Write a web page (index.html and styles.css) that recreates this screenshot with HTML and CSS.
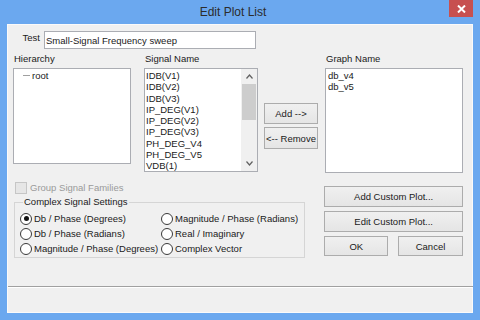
FILE: index.html
```html
<!DOCTYPE html>
<html lang="en">
<head>
  <meta charset="UTF-8">
  <title>Edit Plot List</title>
  <link rel="stylesheet" href="styles.css">
</head>
<body>
  <div class="window">
    <div class="titlebar">
      <div class="spacer"></div>
      <div class="title">Edit Plot List</div>
      <div class="close">
        <svg width="9" height="8" viewBox="0 0 9 8"><path d="M1 0.5 L8 7.5 M8 0.5 L1 7.5" stroke="#fff" stroke-width="2"/></svg>
      </div>
    </div>
    <div class="client">
      <div class="main">
        <div class="test-row">
          <label class="test-label">Test</label>
          <input class="test-input" type="text" value="Small-Signal Frequency sweep">
        </div>

        <div class="lists">
          <div class="col col-hier">
            <div class="col-label">Hierarchy</div>
            <div class="box hier-box">
              <div class="tree-item"><span class="tree-line"></span>root</div>
            </div>
          </div>

          <div class="col col-signal">
            <div class="col-label">Signal Name</div>
            <div class="box signal-box">
              <div class="items">
                <div>IDB(V1)</div>
                <div>IDB(V2)</div>
                <div>IDB(V3)</div>
                <div>IP_DEG(V1)</div>
                <div>IP_DEG(V2)</div>
                <div>IP_DEG(V3)</div>
                <div>PH_DEG_V4</div>
                <div>PH_DEG_V5</div>
                <div>VDB(1)</div>
              </div>
              <div class="scrollbar">
                <div class="arrow">
                  <svg width="7" height="5" viewBox="0 0 7 5"><path d="M0.5 4.5 L3.5 1 L6.5 4.5" fill="none" stroke="#606060" stroke-width="1.2"/></svg>
                </div>
                <div class="track"><div class="thumb"></div></div>
                <div class="arrow">
                  <svg width="7" height="5" viewBox="0 0 7 5"><path d="M0.5 0.5 L3.5 4 L6.5 0.5" fill="none" stroke="#606060" stroke-width="1.2"/></svg>
                </div>
              </div>
            </div>
          </div>

          <div class="col col-move">
            <button class="btn btn-add">Add --&gt;</button>
            <button class="btn btn-remove">&lt;-- Remove</button>
          </div>

          <div class="col col-graph">
            <div class="col-label">Graph Name</div>
            <div class="box graph-box">
              <div>db_v4</div>
              <div>db_v5</div>
            </div>
          </div>
        </div>

        <div class="bottom">
          <div class="bottom-left">
            <div class="check-row">
              <span class="checkbox"></span>
              <span class="check-label">Group Signal Families</span>
            </div>
            <fieldset class="group">
              <legend>Complex Signal Settings</legend>
              <div class="radios">
                <div class="radio-row"><span class="radio checked"></span>Db / Phase (Degrees)</div>
                <div class="radio-row"><span class="radio"></span>Magnitude / Phase (Radians)</div>
                <div class="radio-row"><span class="radio"></span>Db / Phase (Radians)</div>
                <div class="radio-row"><span class="radio"></span>Real / Imaginary</div>
                <div class="radio-row"><span class="radio"></span>Magnitude / Phase (Degrees)</div>
                <div class="radio-row"><span class="radio"></span>Complex Vector</div>
              </div>
            </fieldset>
          </div>
          <div class="bottom-right">
            <button class="btn btn-wide">Add Custom Plot...</button>
            <button class="btn btn-wide">Edit Custom Plot...</button>
            <div class="ok-row">
              <button class="btn btn-ok">OK</button>
              <button class="btn btn-cancel">Cancel</button>
            </div>
          </div>
        </div>
      </div>
      <div class="status"></div>
    </div>
  </div>
</body>
</html>
```

FILE: styles.css
```css
body {
  margin: 0;
  font-family: 'Liberation Sans', Arial, sans-serif;
  font-size: 9.5px;
  color: #1a1a1a;
  white-space: nowrap;
}
.window {
  width: 480px;
  height: 320px;
  box-sizing: border-box;
  background: #6ba8ef;
  padding: 0 7px 7px 7px;
  display: flex;
  flex-direction: column;
}
.titlebar {
  height: 24px;
  display: flex;
  align-items: flex-start;
}
.spacer {
  width: 10px;
}
.title {
  flex: 1;
  text-align: center;
  font-size: 12px;
  line-height: 24px;
  color: #2c2c2c;
}
.close {
  width: 24px;
  height: 17px;
  background: #c75050;
  display: flex;
  align-items: center;
  justify-content: center;
}
.client {
  flex: 1;
  background: #f0f0f0;
  display: flex;
  flex-direction: column;
  border-top: 1px solid #fafafa;
  border-left: 1px solid #fafafa;
  box-shadow: inset -1px -1px 0 #fafafa;
}
.main {
  height: 261px;
  box-sizing: border-box;
  padding: 6px 10px 0 5px;
}
.status {
  flex: 1;
  border-top: 1px solid #a0a0a0;
  box-shadow: inset 0 1px 0 #fff;
}

/* test row */
.test-row {
  display: flex;
  height: 18px;
}
.test-label {
  width: 27px;
  padding-right: 4px;
  text-align: right;
  line-height: 14px;
}
.test-input {
  width: 212px;
  height: 18px;
  box-sizing: border-box;
  margin: 0;
  border: 1px solid #abadb3;
  padding: 0 1px;
  font-family: inherit;
  font-size: 9.5px;
  color: #1a1a1a;
  background: #fff;
}

/* lists */
.lists {
  display: flex;
  margin-top: 3px;
}
.col-label {
  height: 14px;
  line-height: 14px;
  margin-bottom: 2px;
  padding-left: 1px;
}
.box {
  background: #fff;
  border: 1px solid #abadb3;
  box-sizing: border-box;
  line-height: 11.25px;
}
.col-hier {
  width: 118px;
}
.hier-box {
  height: 96px;
  padding-top: 1px;
}
.tree-item {
  display: flex;
  align-items: center;
  padding-left: 9px;
}
.tree-line {
  width: 7px;
  border-top: 1px solid #a0a0a0;
  margin-right: 2px;
}
.col-signal {
  width: 114px;
  margin-left: 13px;
}
.signal-box {
  height: 104px;
  display: flex;
}
.items {
  flex: 1;
  padding: 1px 0 0 1px;
}
.scrollbar {
  width: 16px;
  display: flex;
  flex-direction: column;
  background: #f0f0f0;
}
.arrow {
  height: 15px;
  display: flex;
  align-items: center;
  justify-content: center;
}
.track {
  flex: 1;
}
.thumb {
  height: 36px;
  margin: 0 1px;
  background: #cdcdcd;
}
.col-move {
  width: 54px;
  margin-left: 6px;
  padding-top: 51px;
  display: flex;
  flex-direction: column;
  gap: 3px;
}
.col-graph {
  width: 138px;
  margin-left: 7px;
}
.graph-box {
  height: 105px;
  padding: 1px 0 0 2px;
}

/* buttons */
.btn {
  margin: 0;
  padding: 0;
  font-family: inherit;
  font-size: 9.5px;
  color: #1a1a1a;
  white-space: nowrap;
  background: linear-gradient(#f0f0f0, #e5e5e5);
  border: 1px solid #acacac;
  box-sizing: border-box;
}
.btn-add {
  height: 21px;
}
.btn-remove {
  height: 22px;
}

/* bottom section */
.bottom {
  display: flex;
  align-items: flex-start;
  margin-top: 8px;
}
.bottom-left {
  width: 292px;
  margin-left: 1px;
}
.check-row {
  display: flex;
  align-items: center;
  height: 13px;
  padding-left: 1px;
}
.checkbox {
  width: 12px;
  height: 12px;
  box-sizing: border-box;
  border: 1px solid #c6c6c6;
  background: #e6e6e6;
  margin-right: 3px;
}
.check-label {
  color: #9a9a9a;
}
.group {
  margin: 2px 0 0 0;
  padding: 3px 0 1px 5px;
  border: 1px solid #d5d5d5;
  height: 62px;
  box-sizing: border-box;
}
.group legend {
  margin-left: 3px;
  padding: 0 1px;
  line-height: 12px;
}
.radios {
  display: grid;
  grid-template-columns: 141px 1fr;
  grid-auto-rows: 15px;
}
.radio-row {
  display: flex;
  align-items: center;
}
.radio {
  flex: none;
  width: 12px;
  height: 12px;
  box-sizing: border-box;
  border: 1px solid #3a3a3a;
  border-radius: 50%;
  background: #fff;
  margin-right: 2px;
  display: flex;
  align-items: center;
  justify-content: center;
}
.radio.checked::after {
  content: "";
  width: 5px;
  height: 5px;
  border-radius: 50%;
  background: #111;
}
.bottom-right {
  width: 139px;
  margin-left: 19px;
  padding-top: 5px;
  display: flex;
  flex-direction: column;
  gap: 4px;
}
.btn-wide {
  height: 21px;
}
.ok-row {
  display: flex;
  justify-content: space-between;
}
.btn-ok {
  width: 64px;
  height: 20px;
}
.btn-cancel {
  width: 65px;
  height: 20px;
}
```
